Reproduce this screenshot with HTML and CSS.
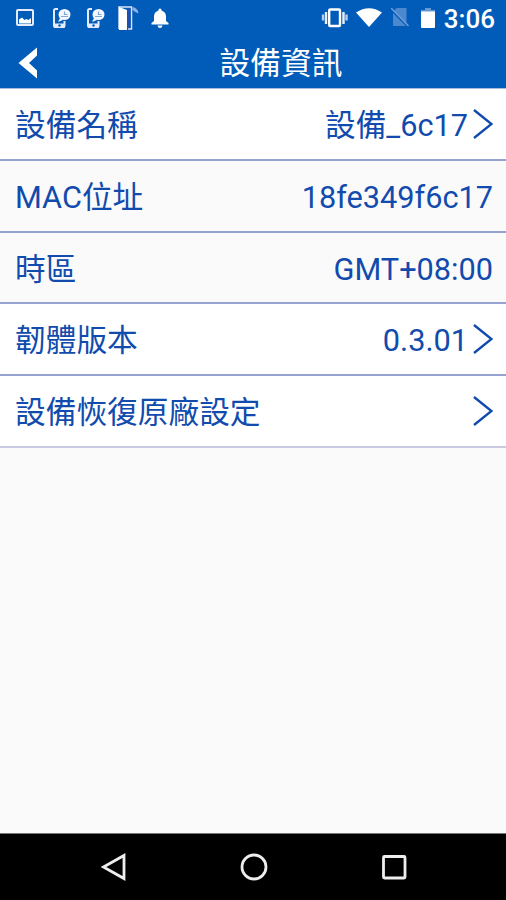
FILE: index.html
```html
<!DOCTYPE html>
<html lang="zh-Hant">
<head>
<meta charset="utf-8">
<title>設備資訊</title>
<link rel="stylesheet" href="styles.css">
</head>
<body>
<div class="screen">
  <div class="status">
    <div class="status-left">
      <svg width="18" height="20" viewBox="0 0 18 20"><rect x="1" y="2" width="16" height="15" rx="1" fill="none" stroke="#e4ebfa" stroke-width="2"/><path d="M3 15.500v-4l3-2 2.500 2.500 2-1 2 1 2.500-2v5.500z" fill="#fff"/></svg>
      <svg width="18" height="20" viewBox="0 0 18 20"><path d="M5 1H2.500Q1 1 1 2.500V18q0 1 1.500 1H10q1.500 0 1.500-1v-5" fill="none" stroke="#e4ebfa" stroke-width="2"/><path d="M1 15.500h10.500V20H1z" fill="#e4ebfa"/><circle cx="6.500" cy="17.500" r="1.200" fill="#015bb8"/><ellipse cx="11.500" cy="6.500" rx="6" ry="5.500" fill="#f4f7ff"/><path d="M7 10l-2 4 5-2z" fill="#f4f7ff"/><path d="M8 8.500h7M11.500 3.500v3h3" fill="none" stroke="#7daadd" stroke-width="1.200"/></svg>
      <svg width="18" height="20" viewBox="0 0 18 20"><path d="M5 1H2.500Q1 1 1 2.500V18q0 1 1.500 1H10q1.500 0 1.500-1v-5" fill="none" stroke="#e4ebfa" stroke-width="2"/><path d="M1 15.500h10.500V20H1z" fill="#e4ebfa"/><circle cx="6.500" cy="17.500" r="1.200" fill="#015bb8"/><ellipse cx="11.500" cy="6.500" rx="6" ry="5.500" fill="#f4f7ff"/><path d="M7 10l-2 4 5-2z" fill="#f4f7ff"/><path d="M8 8.500h7M11.500 3.500v3h3" fill="none" stroke="#7daadd" stroke-width="1.200"/></svg>
      <svg width="22" height="25" viewBox="0 0 22 25"><path d="M1 23V1h12.500v22H10" fill="none" stroke="#dce4f7" stroke-width="1.500"/><path d="M1 1l8 3v20H1z" fill="#fff"/><path d="M10 2h2.500v20H10z" fill="#1c4fb0"/><path d="M14.500 1q5.500 1 6 6.500-3-1-6-3.500z" fill="#8db2e1"/></svg>
      <svg width="18" height="20" viewBox="0 0 18 20"><path d="M7.500 1.500q1.500-2 3 0v1Q15 4 15 8.500V13l2.500 2v1.500H.5V15L3 13V8.500Q3 4 7.500 2.500zM6.500 17.500h5Q11 20 9 20t-2.500-2.500z" fill="#fff"/></svg>
    </div>
    <div class="status-right">
      <svg width="28" height="22" viewBox="0 0 28 22"><rect x="8.200" y="2.500" width="10.800" height="16.500" rx="1" fill="none" stroke="#fff" stroke-width="2.400"/><path d="M5 5v12M22.500 5v12" stroke="#e8effb" stroke-width="2.400"/><path d="M2 7.500v6M25.500 7.500v6" stroke="#b8cdec" stroke-width="2.400"/></svg>
      <svg width="26" height="20" viewBox="0 0 26 20"><path d="M0 4.500Q13-4 26 4.500L13 19z" fill="#fff"/></svg>
      <svg width="18" height="20" viewBox="0 0 18 20"><path d="M5.500 0H15.500V16L3 3zM2 5l13 13H2z" fill="#4c88cd"/><path d="M0 0l17.500 18" stroke="#6e9fd8" stroke-width="1.500"/></svg>
      <svg width="14" height="21" viewBox="0 0 14 21"><path d="M4 0h6v2h4V5H0V2h4z" fill="#6598d5"/><path d="M0 3.500h14V19q0 1-1 1H1q-1 0-1-1z" fill="#fff"/></svg>
      <span class="clock">3:06</span>
    </div>
  </div>
  <header class="header">
    <svg class="back" width="20" height="32" viewBox="0 0 20 32"><path d="M19 .5V8.500L11 16l8 7.500v8L.5 16z" fill="#fff"/></svg>
    <h1>設備資訊</h1>
  </header>
  <main class="list">
    <div class="row"><span>設備名稱</span><span class="value">設備_6c17</span><svg class="chev" width="20" height="30" viewBox="0 0 20 30"><path d="M1 1l17.500 14L1 29"/></svg></div>
    <div class="row plain"><span>MAC位址</span><span class="value">18fe349f6c17</span></div>
    <div class="row plain"><span>時區</span><span class="value">GMT+08:00</span></div>
    <div class="row"><span>韌體版本</span><span class="value">0.3.01</span><svg class="chev" width="20" height="30" viewBox="0 0 20 30"><path d="M1 1l17.500 14L1 29"/></svg></div>
    <div class="row last"><span>設備恢復原廠設定</span><span class="value"></span><svg class="chev" width="20" height="30" viewBox="0 0 20 30"><path d="M1 1l17.500 14L1 29"/></svg></div>
  </main>
  <nav class="nav">
    <svg width="28" height="30" viewBox="0 0 28 30"><path d="M24 3.500v23L3.500 15z"/></svg>
    <svg width="28" height="30" viewBox="0 0 28 30"><circle cx="14" cy="15" r="12"/></svg>
    <svg width="28" height="30" viewBox="0 0 28 30"><rect x="3.500" y="4.500" width="21.500" height="21.500" rx="1"/></svg>
  </nav>
</div>
</body>
</html>
```

FILE: styles.css
```css
* { box-sizing: border-box; }
body {
  margin: 0;
  font-family: Roboto, "Noto Sans CJK TC", sans-serif;
}
svg { display: block; flex: none; }
.screen {
  display: flex;
  flex-direction: column;
  width: 506px;
  height: 900px;
  overflow: hidden;
  background: #fafafa;
}
.status {
  display: flex;
  justify-content: space-between;
  height: 37px;
  padding: 0 11px 0 16px;
  background: #015bb8;
}
.status-left, .status-right { display: flex; align-items: center; height: 36px; }
.status-left { gap: 16px; }
.status-left svg:nth-child(1) { margin-right: 3px; }
.status-left svg:nth-child(4) { margin-left: -3px; margin-right: -5px; }
.status-right { gap: 9px; }
.status-right svg:nth-child(2) { margin-left: -2px; }
.status-right svg:nth-child(4) { margin-left: 3px; }
.clock {
  color: #fff;
  font-size: 26px;
  font-weight: 500;
  line-height: 36px;
  padding-top: 2px;
}
.header {
  display: grid;
  grid-template-columns: 56px 1fr 0;
  align-items: center;
  height: 52px;
  background: #015bb8;
  border-bottom: 1px solid #a9bce2;
}
.back { margin-left: 18px; }
.header h1 {
  margin: 0;
  padding-top: 3px;
  color: #fff;
  font-size: 30.700px;
  font-weight: 400;
  line-height: 48px;
  text-align: center;
}
.list { flex: 1; }
.row {
  display: flex;
  align-items: center;
  height: 71.800px;
  padding: 0 13px 0 15px;
  background: #fff;
  border-bottom: 2px solid #98a2d0;
  color: #114bad;
  font-size: 30.700px;
  line-height: 66px;
  white-space: nowrap;
}
.row span { padding-top: 4px; }
.row.plain { background: #fafafa; }
.row.last { border-bottom-color: #c9c9e2; }
.value { margin-left: auto; }
.chev {
  margin-left: 5px;
  fill: none;
  stroke: #114bad;
  stroke-width: 2.400;
}
.nav {
  display: flex;
  justify-content: space-between;
  align-items: center;
  height: 67px;
  padding: 0 98px 0 100px;
  background: #000;
  border-top: 1px solid #777;
}
.nav svg { fill: none; stroke: #eee; stroke-width: 2.800; }
```
